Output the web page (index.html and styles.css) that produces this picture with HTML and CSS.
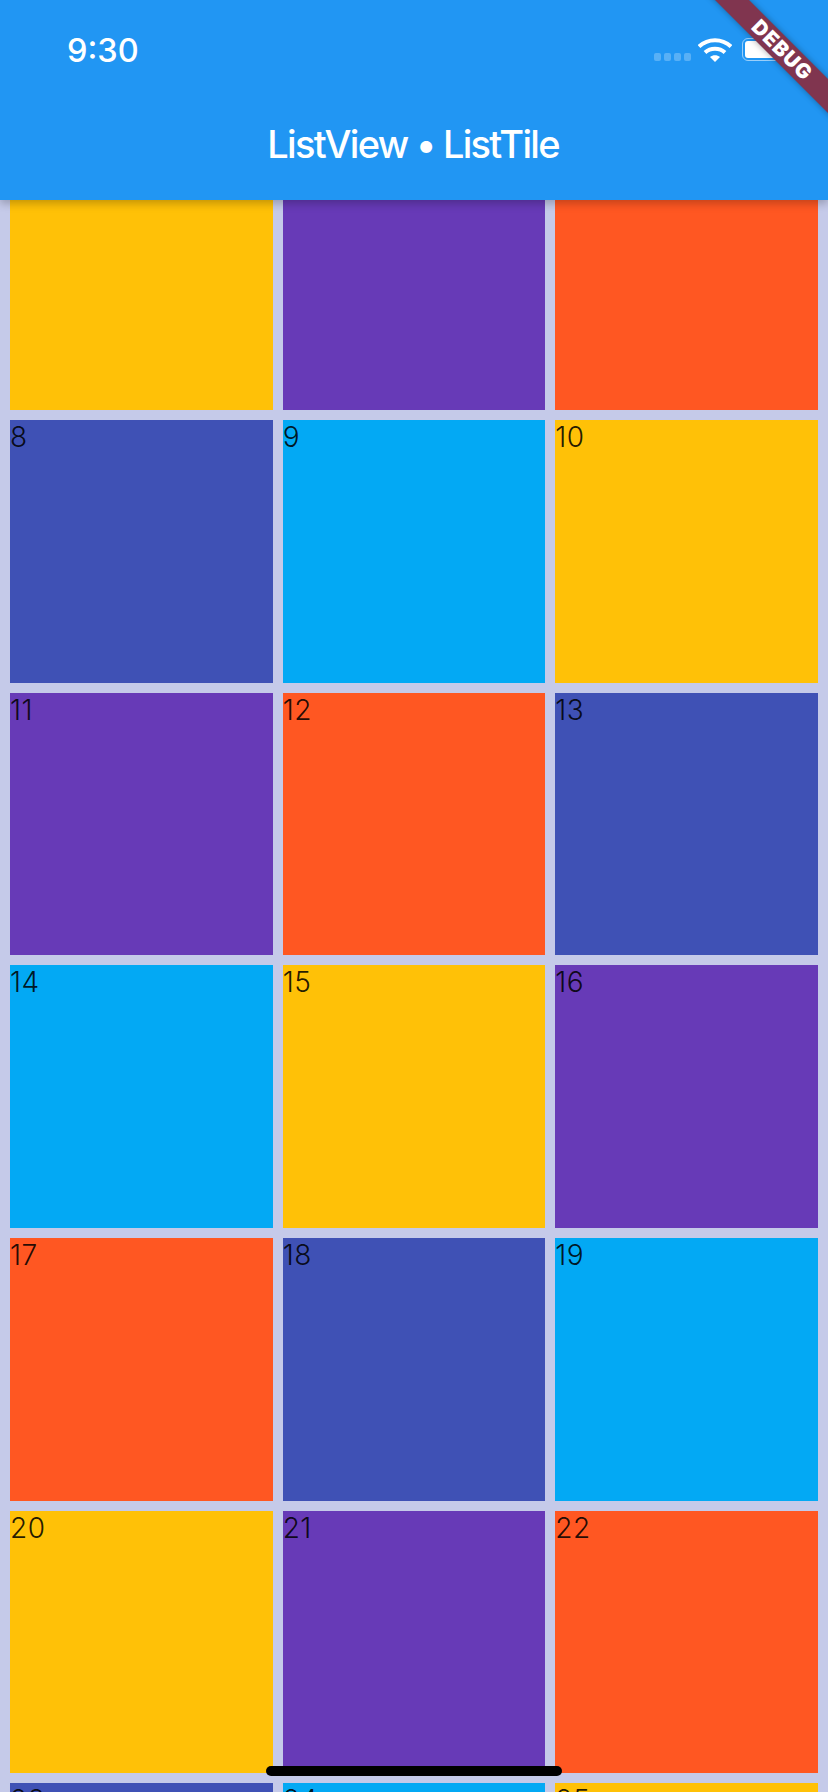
FILE: index.html
```html
<!DOCTYPE html>
<html lang="en">
<head>
    <meta charset="UTF-8">
    <meta name="viewport" content="width=device-width, initial-scale=1.0">
    <title>ListView • ListTile</title>
    <link rel="stylesheet" href="styles.css">
</head>
<body>
    <header class="app-bar">
        <div class="status-bar">
            <span class="clock">9:30</span>
            <div class="status-icons">
                <div class="signal">
                    <span class="signal-dot"></span>
                    <span class="signal-dot"></span>
                    <span class="signal-dot"></span>
                    <span class="signal-dot"></span>
                </div>
                <svg class="wifi" width="34" height="25" viewBox="0 0 34 25">
                    <path d="M1 9.5C10 1 24 1 33 9.5" fill="none" stroke="#fff" stroke-width="4"/>
                    <path d="M7 15.5C12.5 10.5 21.500 10.500 27 15.500" fill="none" stroke="#fff" stroke-width="4"/>
                    <path d="M12 20L17 25L22 20C19 17.500 15 17.500 12 20Z" fill="#fff"/>
                </svg>
                <div class="battery"><div class="battery-level"></div></div>
            </div>
        </div>
        <h1 class="title">ListView • ListTile</h1>
    </header>

    <main class="list">
        <div class="grid">
            <!-- first row is scrolled under the app bar, its numbers are out of view -->
            <div class="tile amber"></div>
            <div class="tile purple"></div>
            <div class="tile orange"></div>
            <div class="tile indigo">8</div>
            <div class="tile sky">9</div>
            <div class="tile amber">10</div>
            <div class="tile purple">11</div>
            <div class="tile orange">12</div>
            <div class="tile indigo">13</div>
            <div class="tile sky">14</div>
            <div class="tile amber">15</div>
            <div class="tile purple">16</div>
            <div class="tile orange">17</div>
            <div class="tile indigo">18</div>
            <div class="tile sky">19</div>
            <div class="tile amber">20</div>
            <div class="tile purple">21</div>
            <div class="tile orange">22</div>
            <div class="tile indigo">23</div>
            <div class="tile sky">24</div>
            <div class="tile amber">25</div>
        </div>
    </main>

    <div class="debug-banner"><span>DEBUG</span></div>
    <div class="home-indicator"></div>
</body>
</html>
```

FILE: styles.css
```css
html, body {
    height: 100%;
}

body {
    margin: 0;
    height: 1792px;
    overflow: hidden;
    position: relative;
    display: flex;
    flex-direction: column;
    background-color: #c5cae9;
    font-family: Inter, "Liberation Sans", sans-serif;
}

.app-bar {
    position: relative;
    z-index: 2;
    flex: none;
    height: 200px;
    box-sizing: border-box;
    background-color: #2196f3;
    color: #fff;
    box-shadow: 0 4px 8px rgba(0, 0, 0, 0.22);
}

.status-bar {
    height: 100px;
    display: flex;
    justify-content: space-between;
    padding: 0 40px 0 67px;
}

.clock {
    font-size: 32.5px;
    font-weight: 500;
    line-height: 40px;
    margin-top: 31px;
}

.status-icons {
    display: flex;
    align-items: flex-start;
    padding-top: 37px;
}

.signal {
    display: flex;
    gap: 3px;
    margin-top: 16px;
    margin-right: 7px;
}

.signal-dot {
    width: 7px;
    height: 8px;
    border-radius: 2px;
    background-color: rgba(255, 255, 255, 0.25);
}

.wifi {
    display: block;
    margin-right: 10px;
}

.battery {
    width: 46px;
    height: 23px;
    box-sizing: border-box;
    padding: 2px;
    margin-top: 1px;
    border: 1.500px solid rgba(255, 255, 255, 0.55);
    border-radius: 6px;
}

.battery-level {
    width: 36px;
    height: 100%;
    background-color: #fff;
    border-radius: 3px;
}

.title {
    margin: 18px 0 0;
    padding-right: 2px;
    text-align: center;
    font-size: 38px;
    font-weight: 500;
    line-height: 52px;
    letter-spacing: -1.7px;
}

.list {
    flex: 1;
    min-height: 0;
    overflow: hidden;
}

.grid {
    display: grid;
    grid-template-columns: repeat(3, 1fr);
    gap: 10px;
    padding: 0 10px;
    margin-top: -52.67px;
}

.tile {
    aspect-ratio: 1;
    font-size: 28px;
    font-weight: 300;
    line-height: 34px;
    letter-spacing: 0.5px;
    color: rgba(0, 0, 0, 0.87);
}

.amber { background-color: #ffc107; }
.purple { background-color: #673ab7; }
.orange { background-color: #ff5722; }
.indigo { background-color: #3f51b5; }
.sky { background-color: #03a9f4; }

/* corner ribbon, sits over everything */
.debug-banner {
    position: absolute;
    z-index: 3;
    top: 36px;
    left: 670px;
    width: 220px;
    height: 24px;
    padding-left: 6px;
    box-sizing: border-box;
    display: flex;
    align-items: center;
    justify-content: center;
    transform: rotate(45deg);
    background-color: #80354f;
    box-shadow: 0 0 6px rgba(0, 0, 0, 0.35);
    color: #fff;
    font-size: 20.4px;
    font-weight: 900;
    line-height: 24px;
    letter-spacing: 1px;
}

.home-indicator {
    position: absolute;
    z-index: 3;
    left: 266px;
    bottom: 16px;
    width: 296px;
    height: 10px;
    border-radius: 5px;
    background-color: #000;
}
```
